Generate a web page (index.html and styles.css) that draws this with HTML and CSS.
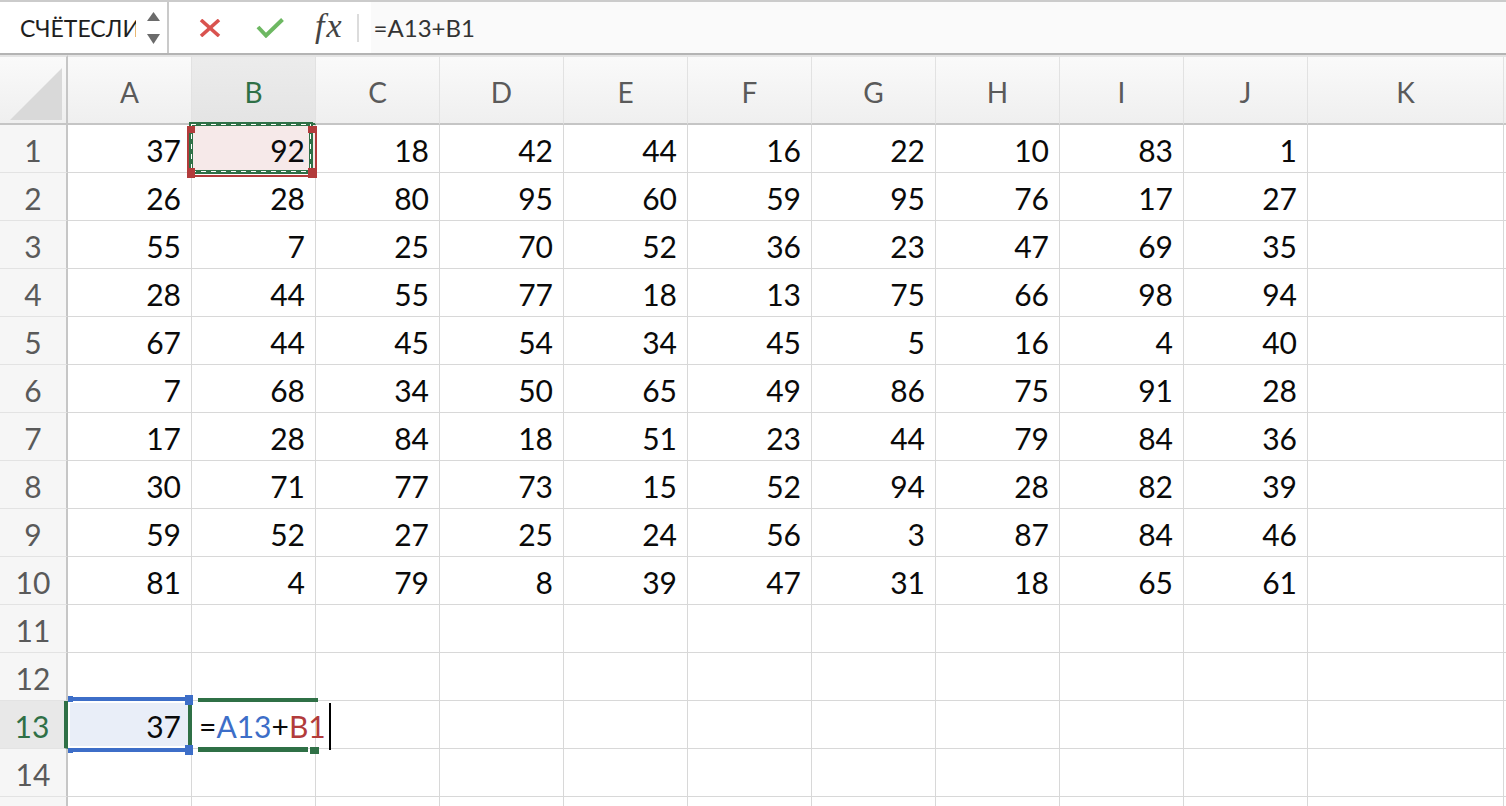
FILE: index.html
```html
<!DOCTYPE html>
<html lang="ru">
<head>
<meta charset="utf-8">
<title>Excel</title>
<link rel="stylesheet" href="styles.css">
</head>
<body>
<div class="app">
  <div class="toolbar">
    <div class="namebox">
      <span class="nb-text">СЧЁТЕСЛИ</span>
      <svg class="spin" width="13" height="32" viewBox="0 0 13 32"><polygon points="6.5,0 13,9 0,9" fill="#6b6b6b"/><polygon points="0,22 13,22 6.5,32" fill="#6b6b6b"/></svg>
    </div>
    <div class="tools">
      <svg class="ic-x" width="22" height="18" viewBox="0 0 22 18"><path d="M2 1 L20 17 M20 1 L2 17" stroke="#d9534f" stroke-width="3.6" fill="none"/></svg>
      <svg class="ic-ok" width="28" height="21" viewBox="0 0 28 21"><polyline points="2,10 10,18.5 26.5,2.5" stroke="#6db862" stroke-width="4" fill="none"/></svg>
      <span class="fx">fx</span>
      <span class="sep"></span>
    </div>
    <div class="formula">=A13+B1</div>
  </div>

  <div class="sheet">
    <div class="corner"><svg width="52" height="52" viewBox="0 0 52 52"><polygon points="52,0 52,52 0,52" fill="#d9d9d9"/></svg></div>
    <div class="h">A</div><div class="h act">B</div><div class="h">C</div><div class="h">D</div><div class="h">E</div><div class="h">F</div><div class="h">G</div><div class="h">H</div><div class="h">I</div><div class="h">J</div><div class="h">K</div><div class="h"></div>

    <div class="r">1</div>
    <div class="c">37</div>
    <div class="c b1">92<span class="ants"></span><span class="redbox"></span><span class="hd red tl"></span><span class="hd red tr"></span><span class="hd red bl"></span><span class="hd red br"></span></div>
    <div class="c">18</div><div class="c">42</div><div class="c">44</div><div class="c">16</div><div class="c">22</div><div class="c">10</div><div class="c">83</div><div class="c">1</div><div class="c"></div><div class="c"></div>

    <div class="r">2</div>
    <div class="c">26</div><div class="c">28</div><div class="c">80</div><div class="c">95</div><div class="c">60</div><div class="c">59</div><div class="c">95</div><div class="c">76</div><div class="c">17</div><div class="c">27</div><div class="c"></div><div class="c"></div>

    <div class="r">3</div>
    <div class="c">55</div><div class="c">7</div><div class="c">25</div><div class="c">70</div><div class="c">52</div><div class="c">36</div><div class="c">23</div><div class="c">47</div><div class="c">69</div><div class="c">35</div><div class="c"></div><div class="c"></div>

    <div class="r">4</div>
    <div class="c">28</div><div class="c">44</div><div class="c">55</div><div class="c">77</div><div class="c">18</div><div class="c">13</div><div class="c">75</div><div class="c">66</div><div class="c">98</div><div class="c">94</div><div class="c"></div><div class="c"></div>

    <div class="r">5</div>
    <div class="c">67</div><div class="c">44</div><div class="c">45</div><div class="c">54</div><div class="c">34</div><div class="c">45</div><div class="c">5</div><div class="c">16</div><div class="c">4</div><div class="c">40</div><div class="c"></div><div class="c"></div>

    <div class="r">6</div>
    <div class="c">7</div><div class="c">68</div><div class="c">34</div><div class="c">50</div><div class="c">65</div><div class="c">49</div><div class="c">86</div><div class="c">75</div><div class="c">91</div><div class="c">28</div><div class="c"></div><div class="c"></div>

    <div class="r">7</div>
    <div class="c">17</div><div class="c">28</div><div class="c">84</div><div class="c">18</div><div class="c">51</div><div class="c">23</div><div class="c">44</div><div class="c">79</div><div class="c">84</div><div class="c">36</div><div class="c"></div><div class="c"></div>

    <div class="r">8</div>
    <div class="c">30</div><div class="c">71</div><div class="c">77</div><div class="c">73</div><div class="c">15</div><div class="c">52</div><div class="c">94</div><div class="c">28</div><div class="c">82</div><div class="c">39</div><div class="c"></div><div class="c"></div>

    <div class="r">9</div>
    <div class="c">59</div><div class="c">52</div><div class="c">27</div><div class="c">25</div><div class="c">24</div><div class="c">56</div><div class="c">3</div><div class="c">87</div><div class="c">84</div><div class="c">46</div><div class="c"></div><div class="c"></div>

    <div class="r">10</div>
    <div class="c">81</div><div class="c">4</div><div class="c">79</div><div class="c">8</div><div class="c">39</div><div class="c">47</div><div class="c">31</div><div class="c">18</div><div class="c">65</div><div class="c">61</div><div class="c"></div><div class="c"></div>

    <div class="r">11</div>
    <div class="c"></div><div class="c"></div><div class="c"></div><div class="c"></div><div class="c"></div><div class="c"></div><div class="c"></div><div class="c"></div><div class="c"></div><div class="c"></div><div class="c"></div><div class="c"></div>

    <div class="r">12</div>
    <div class="c"></div><div class="c"></div><div class="c"></div><div class="c"></div><div class="c"></div><div class="c"></div><div class="c"></div><div class="c"></div><div class="c"></div><div class="c"></div><div class="c"></div><div class="c"></div>

    <div class="r act">13</div>
    <div class="c a13">37<span class="bluelines"></span><span class="hd blue tl"></span><span class="hd blue tr"></span><span class="hd blue bl"></span><span class="hd blue br"></span></div>
    <div class="c b13"><span class="ftext">=<span class="fa">A13</span>+<span class="fb">B1</span></span><span class="g gl"></span><span class="g gt"></span><span class="g gb"></span><span class="g gh"></span></div>
    <div class="c"></div><div class="c"></div><div class="c"></div><div class="c"></div><div class="c"></div><div class="c"></div><div class="c"></div><div class="c"></div><div class="c"></div><div class="c"></div>

    <div class="r">14</div>
    <div class="c"></div><div class="c"></div><div class="c"></div><div class="c"></div><div class="c"></div><div class="c"></div><div class="c"></div><div class="c"></div><div class="c"></div><div class="c"></div><div class="c"></div><div class="c"></div>

    <div class="r"></div>
    <div class="c"></div><div class="c"></div><div class="c"></div><div class="c"></div><div class="c"></div><div class="c"></div><div class="c"></div><div class="c"></div><div class="c"></div><div class="c"></div><div class="c"></div><div class="c"></div>
  </div>
</div>
</body>
</html>
```

FILE: styles.css
```css
* { box-sizing: border-box; }
html, body {
  margin: 0;
  padding: 0;
  background: #fff;
}
body {
  width: 1506px;
  height: 806px;
  overflow: hidden;
  font-family: Lato, "Open Sans", "DejaVu Sans", sans-serif;
}
.app {
  display: flex;
  flex-direction: column;
  height: 806px;
}

/* ---------- toolbar ---------- */
.toolbar {
  height: 55px;
  flex: none;
  display: flex;
  align-items: stretch;
  border-top: 2px solid #cbcbcb;
  border-bottom: 2px solid #b4b4b4;
  background: #fff;
}
.namebox {
  width: 169px;
  flex: none;
  display: flex;
  align-items: center;
  padding-left: 20px;
  border-right: 2px solid #cacaca;
}
.nb-text {
  width: 116px;
  overflow: hidden;
  white-space: nowrap;
  font-size: 23px;
  color: #1e1e1e;
}
.spin {
  margin-left: 11px;
  flex: none;
}
.tools {
  display: flex;
  align-items: center;
  padding-left: 30px;
}
.ic-x { flex: none; margin-top: 1px; }
.ic-ok { flex: none; margin-left: 35px; }
.fx {
  margin-left: 31px;
  font-family: "Liberation Serif", "DejaVu Serif", serif;
  font-style: italic;
  font-size: 34px;
  letter-spacing: 2px;
  color: #444;
  line-height: 32px;
  margin-top: -3px;
}
.sep {
  margin-left: 13px;
  width: 2px;
  height: 28px;
  background: #dcdcdc;
}
.formula {
  flex: 1;
  margin-left: 12px;
  padding-left: 3px;
  display: flex;
  align-items: center;
  background: #fafafa;
  font-size: 24px;
  color: #333;
}

/* ---------- sheet ---------- */
.sheet {
  flex: 1;
  display: grid;
  grid-template-columns: 68px repeat(10, 124px) 196px 1fr;
  grid-template-rows: 70px;
  grid-auto-rows: 48px;
  overflow: hidden;
}
.corner {
  border-top: 2px solid #e4e4e4;
  border-bottom: 2px solid #c5c5c5;
  border-right: 2px solid #c6c6c6;
  background: linear-gradient(#fafafa, #efefef);
  display: flex;
  justify-content: flex-end;
  align-items: flex-end;
  padding: 0 4px 3px 0;
}
.h {
  border-top: 2px solid #e4e4e4;
  border-bottom: 2px solid #c5c5c5;
  border-right: 1px solid #e2e2e2;
  background: linear-gradient(#fafafa, #efefef);
  text-align: center;
  font-size: 28px;
  color: #5a5a5a;
  padding-top: 4px;
  line-height: 62px;
}
.h.act {
  background: linear-gradient(#ececec, #e4e4e4);
  color: #2f7046;
  border-bottom-color: #2f7046;
}
.r {
  border-right: 2px solid #c6c6c6;
  border-bottom: 1px solid #e3e3e3;
  background: #f6f6f6;
  text-align: center;
  font-size: 30px;
  color: #5a5a5a;
  padding-top: 3px;
  line-height: 44px;
}
.r.act {
  background: #e8e8e8;
  color: #2f7046;
  border-right: 4px solid #2f7046;
}
.c {
  border-right: 1px solid #d8d8d8;
  border-bottom: 1px solid #d8d8d8;
  text-align: right;
  padding: 3px 10px 0 0;
  line-height: 44px;
  font-size: 30px;
  color: #0a0a0a;
  white-space: nowrap;
}

/* handles */
.hd {
  position: absolute;
  z-index: 3;
}
.red { background: #b23b3b; }
.blue { background: #3d6ec8; }

/* B1: copied/referenced cell */
.b1 {
  position: relative;
  background: #f6e9e9;
}
.ants {
  position: absolute;
  left: -3px;
  top: -3px;
  right: 2px;
  bottom: -2px;
  border: 4px solid #2f7046;
}
.ants::after {
  content: "";
  position: absolute;
  inset: -2px;
  background:
    repeating-linear-gradient(90deg, #fff 0 5px, transparent 5px 10px) left top / 100% 1px no-repeat,
    repeating-linear-gradient(90deg, #fff 0 5px, transparent 5px 10px) left bottom / 100% 1px no-repeat,
    repeating-linear-gradient(180deg, #fff 0 5px, transparent 5px 10px) left top / 1px 100% no-repeat,
    repeating-linear-gradient(180deg, #fff 0 5px, transparent 5px 10px) right top / 1px 100% no-repeat;
}
.redbox {
  position: absolute;
  left: -5px;
  right: -2px;
  top: 1px;
  bottom: -5px;
  border: 2px solid #b23b3b;
  border-top: none;
}
.b1 .tl { left: -5px; top: 1px; width: 8px; height: 7px; }
.b1 .tr { left: 116px; top: 1px; width: 9px; height: 7px; }
.b1 .bl { left: -5px; top: 43px; width: 8px; height: 10px; }
.b1 .br { left: 116px; top: 43px; width: 9px; height: 10px; }

/* A13: blue reference */
.a13 {
  position: relative;
  background: #e9eef8;
  box-shadow: inset 2px 2px 0 #fff, inset -2px -2px 0 #fff;
}
.bluelines {
  position: absolute;
  left: 5px;
  right: 6px;
  top: -4px;
  bottom: -4px;
  border-top: 4px solid #3d6ec8;
  border-bottom: 4px solid #3d6ec8;
}
.a13 .tl { left: 0; top: -5px; width: 5px; height: 6px; }
.a13 .tr { left: 117px; top: -6px; width: 8px; height: 10px; }
.a13 .bl { left: 0; top: 47px; width: 5px; height: 5px; }
.a13 .br { left: 117px; top: 44px; width: 8px; height: 10px; }

/* B13: active editing cell */
.b13 {
  position: relative;
  text-align: left;
  padding-left: 7px;
  padding-right: 0;
  color: #0a0a0a;
}
.ftext::after {
  content: "";
  position: absolute;
  top: 2px;
  width: 2px;
  height: 47px;
  margin-left: 3px;
  background: #000;
}
.fa { color: #3d6ec8; }
.fb { color: #b23b3b; }
.g {
  position: absolute;
  background: #2f7046;
}
.gl { left: -4px; top: 0; width: 4px; height: 47px; }
.gt { left: 6px; top: -3px; width: 120px; height: 4px; }
.gb { left: 6px; top: 46px; width: 110px; height: 5px; }
.gh { left: 118px; top: 46px; width: 9px; height: 7px; }
```
